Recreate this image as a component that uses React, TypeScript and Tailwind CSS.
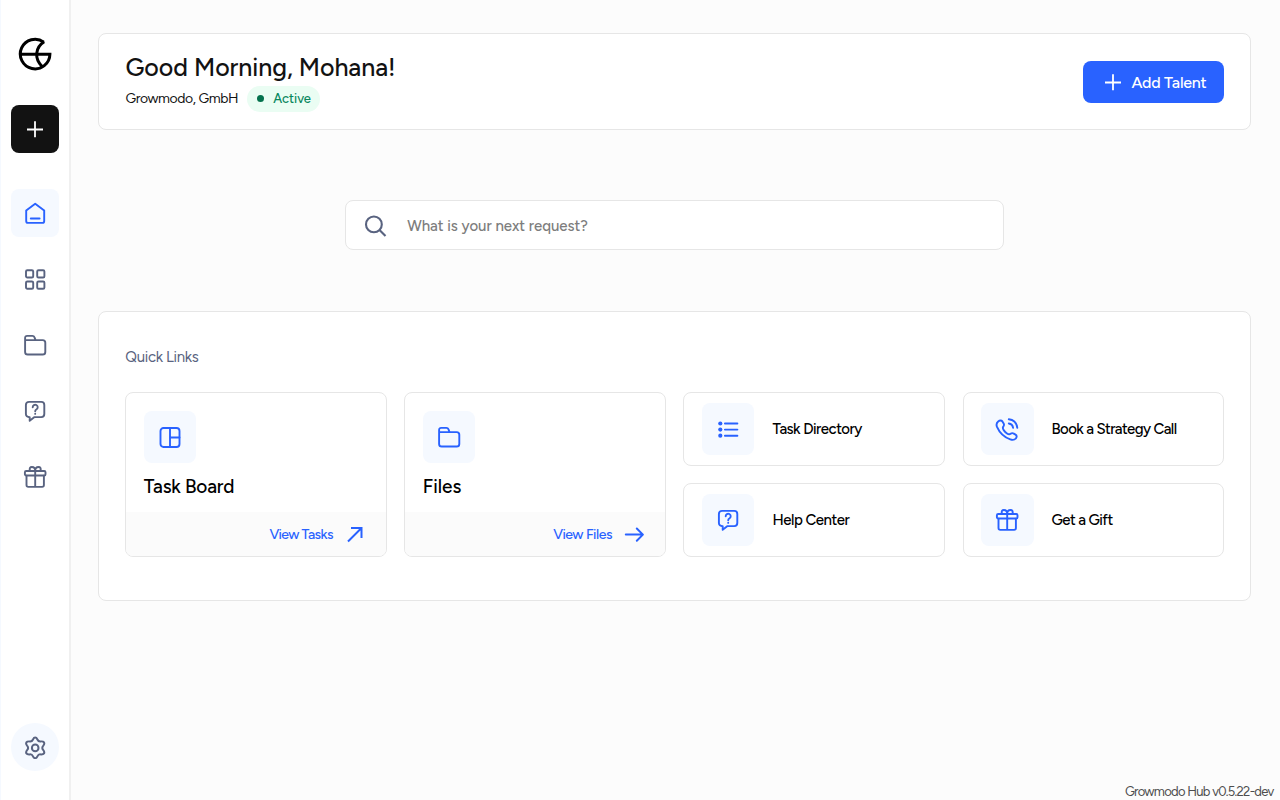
import React from "react";

type IconProps = { className?: string };

function Svg({ className = "", children }: IconProps & { children: React.ReactNode }) {
  return (
    <svg
      viewBox="0 0 24 24"
      width="24"
      height="24"
      fill="none"
      stroke="currentColor"
      strokeWidth="1.9"
      strokeLinecap="round"
      strokeLinejoin="round"
      className={`shrink-0 ${className}`}
    >
      {children}
    </svg>
  );
}

const Logo = () => (
  <svg viewBox="0 0 34 34" width="34" height="34" fill="none" stroke="#000" strokeWidth="3" className="shrink-0">
    <path d="M25.8 5.100A14.800 14.800 0 1 0 31.900 17.300H2.300" />
    <path d="M26.200 4.800C17.500 10.100 15.700 21.500 24.400 29.800" />
  </svg>
);

const HomeIcon = () => (
  <Svg>
    <path d="M3.2 9.4 12.2 2.7l9 6.7V20c0 1.1-.7 1.9-1.8 1.9H5c-1.100 0-1.800-.8-1.800-1.900Z" />
    <path d="M7.800 17.500h8.800" />
  </Svg>
);

const GridIcon = () => (
  <Svg>
    <rect x="3" y="3.300" width="7.200" height="7.200" rx="1.300" />
    <rect x="14.200" y="3.300" width="7.200" height="7.200" rx="1.300" />
    <rect x="3" y="14.500" width="7.200" height="7.200" rx="1.300" />
    <rect x="14.200" y="14.500" width="7.200" height="7.200" rx="1.300" />
  </Svg>
);

const FolderIcon = (p: IconProps) => (
  <Svg {...p}>
    <path d="M2.100 7.100V4.900c0-1.200.8-2 2-2h5.300c1 0 1.700.5 2 1.300l1.200 2.900h7.100c1.500 0 2.600 1.100 2.600 2.600v9.200c0 1.500-1.100 2.600-2.600 2.600h-15c-1.500 0-2.600-1.100-2.600-2.600ZM2.100 7.100h10.500" />
  </Svg>
);

const HelpIcon = (p: IconProps) => (
  <Svg {...p}>
    <path d="M6 2.900h12.300c1.800 0 3 1.200 3 3v9.200c0 1.800-1.200 3-3 3h-6.800l-4.800 3.700v-3.600C4.300 18.200 2.900 17 2.900 15V5.900c0-1.800 1.300-3 3.100-3Z" />
    <path d="M9.700 8.200a2.500 2.500 0 1 1 3.900 2.100c-.9.600-1.400 1.100-1.400 1.900" />
    <path d="M12.200 14.800v.100" />
  </Svg>
);

const GiftIcon = (p: IconProps) => (
  <Svg {...p}>
    <rect x="1.900" y="6" width="20.600" height="4.500" rx="1.300" />
    <path d="M3.500 10.700v9.400c0 1.100.7 1.800 1.800 1.800h13.800c1.100 0 1.800-.7 1.800-1.800v-9.400M12.200 6v15.900" />
    <path d="M7.100 5.700C5.900 3.400 7.200 2 8.900 2c2.100 0 3.300 1.500 3.300 3.800C12.200 3.500 13.400 2 15.500 2c1.700 0 3 1.400 1.800 3.700" />
  </Svg>
);

const GearIcon = () => (
  <svg
    viewBox="0 0 24 24"
    width="24"
    height="24"
    fill="none"
    stroke="currentColor"
    strokeWidth="2"
    strokeLinejoin="round"
    className="shrink-0"
  >
    <path d="M12.200 2.600c1.200 0 1.700.8 2.200 1.900.7 1.500 1.800 2.100 3.300 1.900 1.400-.1 2.600-.1 3.300 1 .7 1.200.2 2.100-.7 3.200-1.200 1.400-1.200 3.200 0 4.600.9 1.100 1.400 2 .7 3.200-.7 1.100-1.900 1.100-3.300 1-1.500-.2-2.600.4-3.300 1.900-.5 1.100-1 1.900-2.200 1.900s-1.700-.8-2.200-1.900c-.7-1.500-1.800-2.100-3.300-1.900-1.400.1-2.600.1-3.300-1-.7-1.200-.2-2.100.7-3.200 1.200-1.400 1.200-3.200 0-4.600-.9-1.100-1.400-2-.7-3.200.7-1.100 1.900-1.100 3.300-1 1.500.2 2.600-.4 3.300-1.900.5-1.100 1-1.900 2.200-1.900Z" />
    <circle cx="12.200" cy="12.900" r="3.300" />
  </svg>
);

const BoardIcon = () => (
  <Svg>
    <rect x="2.500" y="3" width="19" height="19" rx="3" />
    <path d="M12 3v19M12 12.500h9.500" />
  </Svg>
);

const ListIcon = () => (
  <Svg>
    <path d="M8.900 6.500h12.500M8.900 12.600h12.500M8.900 18.700h12.500" />
    <g fill="currentColor" stroke="none">
      <circle cx="4.300" cy="6.500" r="2.100" />
      <circle cx="4.300" cy="12.600" r="2.100" />
      <circle cx="4.300" cy="18.700" r="2.100" />
    </g>
  </Svg>
);

const PhoneIcon = () => (
  <Svg>
    <path d="M3.200 4.400c1.500-1.300 3.300-1.200 4.200 0l1.100 1.800c.8 1.300.6 2.300-.1 3.200-1 1.200-.8 2.100.3 3.700 1 1.400 1.900 2.300 3.300 3.300 1.500 1.100 2.400 1.400 3.600.4 1-.8 2-.9 3.200-.2l1.700 1c1.500.9 1.500 2.600.3 3.900-1.300 1.500-3.300 1.700-5.500.9C9.200 20.300 4.500 15.600 2 9.900c-.8-2-.6-4 1.200-5.500Z" />
    <path d="M13.800 2.300c4.700.6 7.900 3.900 8.500 8.500M13.800 6.500c2.500.4 3.900 1.900 4.300 4.300" />
  </Svg>
);

const SearchIcon = () => (
  <svg viewBox="0 0 24 24" width="24" height="24" fill="none" stroke="#596380" strokeWidth="2.100" className="shrink-0">
    <circle cx="10.900" cy="11.400" r="7.900" />
    <path d="m16.500 17 6 6" />
  </svg>
);

const ArrowUpRight = () => (
  <Svg>
    <path strokeWidth="2" strokeLinecap="butt" strokeLinejoin="miter" d="M5 19.500 18 6.500M8 6h10.500v10" />
  </Svg>
);

const ArrowRight = () => (
  <Svg>
    <path strokeWidth="2" d="M3.800 12.600h17M14.800 6.500 20.900 12.600l-6.100 6.100" />
  </Svg>
);

const Plus = ({ className = "" }: IconProps) => (
  <svg viewBox="0 0 18 18" width="18" height="18" stroke="white" strokeWidth="1.800" className={`shrink-0 ${className}`}>
    <path d="M9 1.200v16M1 9.500h16" />
  </svg>
);

function Tile({ children }: { children: React.ReactNode }) {
  return (
    <div className="flex size-[52.500px] shrink-0 items-center justify-center rounded-lg bg-[#f5f9ff] text-[#2962ff]">
      {children}
    </div>
  );
}

function BigCard(props: { icon: React.ReactNode; title: React.ReactNode; link: React.ReactNode; footer: string }) {
  return (
    <a className="row-span-2 flex flex-col overflow-hidden rounded-lg border border-[#e6e6e6] bg-white">
      <div className="flex flex-1 flex-col px-[17.500px] pt-[17.500px]">
        <Tile>{props.icon}</Tile>
        <h2 className="mt-[10px] text-[19px] leading-7 font-medium text-black">{props.title}</h2>
      </div>
      <div className={`flex h-[44px] items-center justify-end bg-[#fbfbfb] text-sm font-medium text-[#2962ff] ${props.footer}`}>
        {props.link}
      </div>
    </a>
  );
}

function SmallCard({ icon, children }: { icon: React.ReactNode; children: React.ReactNode }) {
  return (
    <a className="flex items-center gap-[18px] rounded-lg border border-[#e6e6e6] bg-white px-[17.500px] text-[15px] font-medium text-black">
      <Tile>{icon}</Tile>
      {children}
    </a>
  );
}

export default function App() {
  return (
    <div className="flex h-[800px] w-[1280px] overflow-hidden bg-[#fcfcfc] font-['Figtree','Lato',sans-serif] whitespace-nowrap">
      <aside className="flex w-[71px] shrink-0 flex-col items-center border-r-2 border-l border-r-[#f0f0f0] border-l-[#f5f9ff] bg-white pt-[37px] pb-[29px] text-[#596380]">
        <Logo />
        <button className="mt-[34.400px] flex size-12 shrink-0 items-center justify-center rounded-lg bg-[#121212]">
          <Plus />
        </button>
        <nav className="mt-[35.600px] flex flex-col gap-[18px]">
          <a className="flex size-12 items-center justify-center rounded-lg bg-[#f5f9ff] text-[#2962ff]"><HomeIcon /></a>
          <a className="flex size-12 items-center justify-center"><GridIcon /></a>
          <a className="flex size-12 items-center justify-center"><FolderIcon /></a>
          <a className="flex size-12 items-center justify-center"><HelpIcon /></a>
          <a className="flex size-12 items-center justify-center"><GiftIcon /></a>
        </nav>
        <button className="mt-auto flex size-12 items-center justify-center rounded-full bg-[#f5f9ff]"><GearIcon /></button>
      </aside>

      <div className="flex flex-1 flex-col pl-[27px]">
        <main className="flex w-[1153.400px] flex-1 flex-col pt-[33px]">
          <header className="flex h-[97px] items-center justify-between rounded-lg border border-[#e6e6e6] bg-white px-[26.500px]">
            <div>
              <h1 className="text-[25px] leading-[30px] font-medium tracking-[-0.050px] text-[#121212]">Good Morning, Mohana!</h1>
              <div className="mt-[4px] flex items-center gap-[9px]">
                <span className="pt-px text-sm tracking-[-0.420px] text-[#121212]">Growmodo, GmbH</span>
                <span className="flex h-[26px] w-[73px] items-center gap-[9px] rounded-full bg-[#eafdf3] pl-[10px] text-[13px] font-medium text-[#08875d]">
                  <span className="size-[7px] rounded-full bg-[#04724d]" />
                  <span className="pt-px">Active</span>
                </span>
              </div>
            </div>
            <button className="flex h-[42px] w-[141px] items-center gap-[9px] rounded-lg bg-[#2962ff] pl-[21.500px] text-base font-medium text-white">
              <Plus />
              <span className="pt-0.5 tracking-[-0.220px]">Add Talent</span>
            </button>
          </header>

          <div className="mt-[70px] flex h-[50px] w-[659px] items-center gap-[20px] self-center rounded-lg border border-[#e6e6e6] bg-white pl-[17px]">
            <SearchIcon />
            <span className="pt-0.5 text-[15px] font-medium text-[#7d7d7d]">What is your next request?</span>
          </div>

          <section className="mt-[61px] h-[290px] rounded-lg border border-[#e6e6e6] bg-white px-[26.300px] pt-[35px]">
            <p className="text-[15px] leading-5 tracking-[-0.320px] text-[#596380]">Quick Links</p>
            <div className="mt-[25px] grid h-[165px] grid-cols-4 grid-rows-2 gap-[17.500px]">
              <BigCard icon={<BoardIcon />} title={<span className="tracking-[-0.220px]">Task Board</span>} footer="gap-[10px] pr-[19px]" link={<><span className="pt-0.5 tracking-[-0.600px]">View Tasks</span><ArrowUpRight /></>} />
              <BigCard icon={<FolderIcon />} title="Files" footer="gap-[10px] pr-[19px]" link={<><span className="pt-0.5 tracking-[-0.480px]">View Files</span><ArrowRight /></>} />
              <SmallCard icon={<ListIcon />}><span className="pt-px tracking-[-0.520px]">Task Directory</span></SmallCard>
              <SmallCard icon={<PhoneIcon />}><span className="pt-px tracking-[-0.600px]">Book a Strategy Call</span></SmallCard>
              <SmallCard icon={<HelpIcon />}><span className="pt-px tracking-[-0.480px]">Help Center</span></SmallCard>
              <SmallCard icon={<GiftIcon />}><span className="pt-px tracking-[-0.560px]">Get a Gift</span></SmallCard>
            </div>
          </section>
        </main>
        <footer className="flex h-[18px] items-center justify-end pr-[6.500px] text-[13px] text-[#4d4d4d]">
          <span className="pt-0.5 tracking-[-0.720px]">Growmodo Hub v0.5.22-dev</span>
        </footer>
      </div>
    </div>
  );
}
